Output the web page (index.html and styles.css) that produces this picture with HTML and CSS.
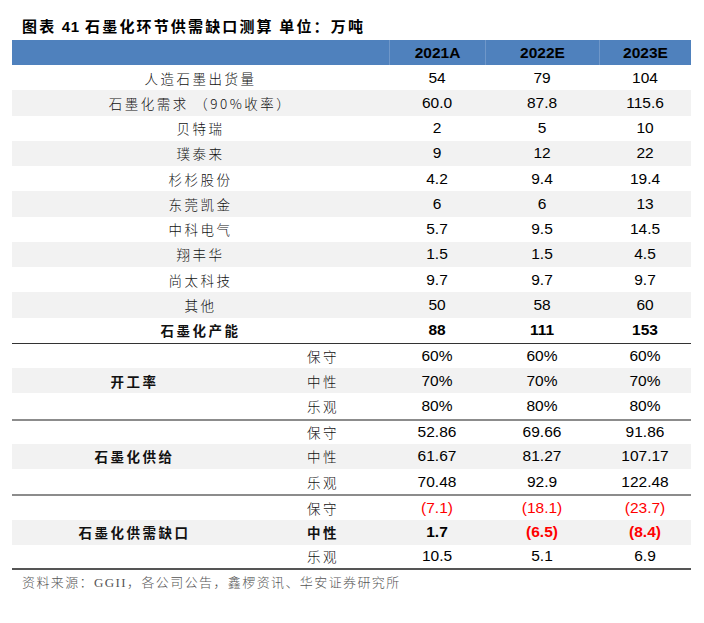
FILE: index.html
```html
<!DOCTYPE html>
<html lang="zh">
<head>
<meta charset="utf-8">
<title>图表 41 石墨化环节供需缺口测算</title>
<link rel="stylesheet" href="styles.css">
</head>
<body>
<div class="page">
  <h1 class="title">图表 <span class="num">41</span> 石墨化环节供需缺口测算 单位：万吨</h1>
  <div class="table">
    <div class="row head">
      <div class="c lab2"></div>
      <div class="c v">2021A</div>
      <div class="c v">2022E</div>
      <div class="c v">2023E</div>
    </div>

    <div class="row"><div class="c lab2 cn">人造石墨出货量</div><div class="c v">54</div><div class="c v">79</div><div class="c v">104</div></div>
    <div class="row g"><div class="c lab2 cn">石墨化需求 （90%收率）</div><div class="c v">60.0</div><div class="c v">87.8</div><div class="c v">115.6</div></div>
    <div class="row"><div class="c lab2 cn">贝特瑞</div><div class="c v">2</div><div class="c v">5</div><div class="c v">10</div></div>
    <div class="row g"><div class="c lab2 cn">璞泰来</div><div class="c v">9</div><div class="c v">12</div><div class="c v">22</div></div>
    <div class="row"><div class="c lab2 cn">杉杉股份</div><div class="c v">4.2</div><div class="c v">9.4</div><div class="c v">19.4</div></div>
    <div class="row g"><div class="c lab2 cn">东莞凯金</div><div class="c v">6</div><div class="c v">6</div><div class="c v">13</div></div>
    <div class="row"><div class="c lab2 cn">中科电气</div><div class="c v">5.7</div><div class="c v">9.5</div><div class="c v">14.5</div></div>
    <div class="row g"><div class="c lab2 cn">翔丰华</div><div class="c v">1.5</div><div class="c v">1.5</div><div class="c v">4.5</div></div>
    <div class="row"><div class="c lab2 cn">尚太科技</div><div class="c v">9.7</div><div class="c v">9.7</div><div class="c v">9.7</div></div>
    <div class="row g"><div class="c lab2 cn">其他</div><div class="c v">50</div><div class="c v">58</div><div class="c v">60</div></div>
    <div class="row b"><div class="c lab2 cn">石墨化产能</div><div class="c v">88</div><div class="c v">111</div><div class="c v">153</div></div>

    <div class="row sec dark"><div class="c lab"></div><div class="c sub cn">保守</div><div class="c v">60%</div><div class="c v">60%</div><div class="c v">60%</div></div>
    <div class="row g"><div class="c lab cn bold">开工率</div><div class="c sub cn">中性</div><div class="c v">70%</div><div class="c v">70%</div><div class="c v">70%</div></div>
    <div class="row"><div class="c lab"></div><div class="c sub cn">乐观</div><div class="c v">80%</div><div class="c v">80%</div><div class="c v">80%</div></div>

    <div class="row sec grey"><div class="c lab"></div><div class="c sub cn">保守</div><div class="c v">52.86</div><div class="c v">69.66</div><div class="c v">91.86</div></div>
    <div class="row g"><div class="c lab cn bold">石墨化供给</div><div class="c sub cn">中性</div><div class="c v">61.67</div><div class="c v">81.27</div><div class="c v">107.17</div></div>
    <div class="row"><div class="c lab"></div><div class="c sub cn">乐观</div><div class="c v">70.48</div><div class="c v">92.9</div><div class="c v">122.48</div></div>

    <div class="row sec grey"><div class="c lab"></div><div class="c sub cn">保守</div><div class="c v red">(7.1)</div><div class="c v red">(18.1)</div><div class="c v red">(23.7)</div></div>
    <div class="row g"><div class="c lab cn bold">石墨化供需缺口</div><div class="c sub cn bold">中性</div><div class="c v bold">1.7</div><div class="c v red bold">(6.5)</div><div class="c v red bold">(8.4)</div></div>
    <div class="row last"><div class="c lab"></div><div class="c sub cn">乐观</div><div class="c v">10.5</div><div class="c v">5.1</div><div class="c v">6.9</div></div>
  </div>
  <p class="source">资料来源：GGII，各公司公告，鑫椤资讯、华安证券研究所</p>
</div>
</body>
</html>
```

FILE: styles.css
```css
html, body {
  margin: 0;
  padding: 0;
  background: #ffffff;
}

.page {
  padding: 17px 0 0 12px;
  width: 679px;
}

.title {
  margin: 0 0 4px 10px;
  font-family: "Noto Sans CJK SC", sans-serif;
  font-size: 15px;
  font-weight: 700;
  letter-spacing: 2.15px;
  line-height: 18px;
  color: #000;
}

.title .num {
  font-family: "Liberation Sans", Arial, sans-serif;
  letter-spacing: 0.5px;
}

.table {
  display: flex;
  flex-direction: column;
}

.row {
  display: grid;
  grid-template-columns: 245px 132px 96px 114px 92px;
  height: 25.25px;
  align-items: center;
  box-sizing: border-box;
}

.row.g {
  background: #f2f2f2;
}

.row.head {
  background: #4f81bd;
  height: 25px;
  color: #fff;
}

.row.head .c {
  font-weight: 700;
  height: 100%;
  display: flex;
  align-items: center;
  justify-content: center;
}

.row.head .v {
  border-left: 1px solid #6f97c9;
  box-sizing: border-box;
}

.c {
  text-align: center;
  white-space: nowrap;
}

.lab2 {
  grid-column: span 2;
}

.cn {
  font-family: "Noto Sans CJK SC", sans-serif;
  font-size: 13.5px;
  font-weight: 300;
  letter-spacing: 2.5px;
  color: #111;
  line-height: 18px;
}

.v {
  font-family: "Liberation Sans", Arial, sans-serif;
  font-size: 15.5px;
  color: #000;
  line-height: 18px;
}

.bold,
.row.b .c {
  font-weight: 700;
}

.red {
  color: #ff0000;
}

.row.sec.dark {
  border-top: 1px solid #333;
}

.row.sec.grey {
  border-top: 2px solid #8c8c8c;
}

.row.last {
  border-bottom: 2px solid #555;
}

.source {
  margin: 4px 0 0 10px;
  font-family: "Liberation Serif", "Noto Sans CJK SC", serif;
  font-size: 13px;
  font-weight: 300;
  letter-spacing: 1.4px;
  color: #555;
  line-height: 18px;
}
```
